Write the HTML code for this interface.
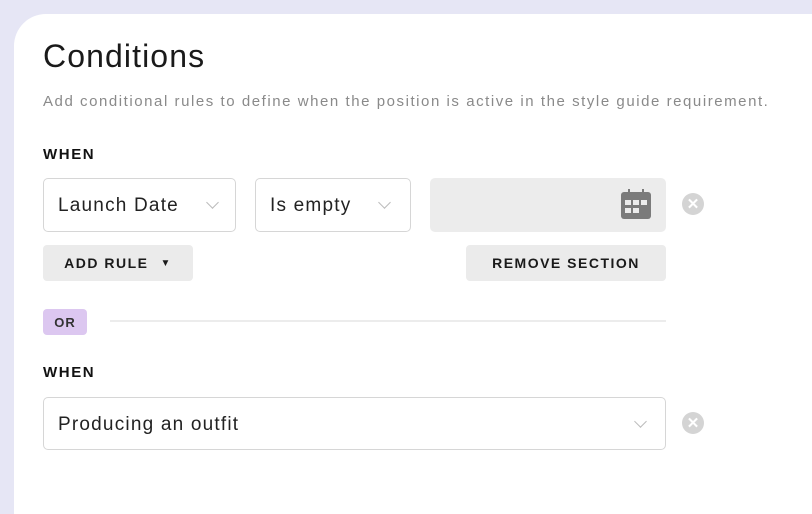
<!DOCTYPE html>
<html><head><meta charset="utf-8"><style>
*{box-sizing:border-box;margin:0;padding:0}
body{width:812px;height:460px;overflow:hidden;background:#e6e6f5;font-family:"Liberation Sans",sans-serif;position:relative}
.card{position:absolute;left:14px;top:14px;width:900px;height:500px;background:#fff;border-top-left-radius:32px}
.a{position:absolute}
h1{position:absolute;left:43px;top:38px;font-size:32px;font-weight:400;color:#1a1a1a;letter-spacing:1.1px}
.sub{left:43px;top:93px;font-size:15px;color:#8a8a8a;letter-spacing:1.55px;white-space:nowrap}
.when{font-size:15px;font-weight:700;color:#111;left:43px;letter-spacing:1.6px}
.sel{border:1px solid #d6d6d6;border-radius:5px;background:#fff;font-size:19px;color:#222;padding-left:14px;padding-top:2px;display:flex;align-items:center;letter-spacing:1.2px}
.chev{position:absolute;top:50%;margin-top:-7px;width:9px;height:9px;border-right:1.5px solid #bbb;border-bottom:1.5px solid #bbb;transform:rotate(45deg)}
.btn{background:#ebebeb;border-radius:4px;font-size:14px;font-weight:700;color:#1a1a1a;display:flex;align-items:center;justify-content:center;letter-spacing:1.5px}
.x{width:22px;height:22px;border-radius:50%;background:#d4d4d4;color:#fff;font-size:15px;font-weight:700;display:flex;align-items:center;justify-content:center}
</style></head><body>
<div class="card"></div>
<h1>Conditions</h1>
<div class="a sub">Add conditional rules to define when the position is active in the style guide requirement.</div>
<div class="a when" style="top:146px">WHEN</div>
<div class="a sel" style="left:43px;top:178px;width:193px;height:54px">Launch Date<span class="chev" style="right:18px"></span></div>
<div class="a sel" style="left:255px;top:178px;width:156px;height:54px">Is empty<span class="chev" style="right:21px"></span></div>
<div class="a" style="left:430px;top:178px;width:236px;height:54px;background:#ececec;border-radius:5px"></div>
<svg class="a" style="left:621px;top:189px" width="30" height="30" viewBox="0 0 30 30"><rect x="0" y="3" width="30" height="27" rx="3" fill="#7b7b7b"/><rect x="7" y="0" width="2" height="6" fill="#7b7b7b"/><rect x="21" y="0" width="2" height="6" fill="#7b7b7b"/><g fill="#ececec"><rect x="4" y="11" width="6" height="5"/><rect x="12" y="11" width="6" height="5"/><rect x="20" y="11" width="6" height="5"/><rect x="4" y="19" width="6" height="5"/><rect x="12" y="19" width="6" height="5"/></g></svg>
<div class="a x" style="left:682px;top:193px">✕</div>
<div class="a btn" style="left:43px;top:245px;width:150px;height:36px">ADD RULE<span style="margin-left:12px;font-size:10px">▼</span></div>
<div class="a btn" style="left:466px;top:245px;width:200px;height:36px">REMOVE SECTION</div>
<div class="a" style="left:43px;top:309px;width:44px;height:26px;background:#dcc7f0;border-radius:4px;font-size:13px;font-weight:700;color:#333;display:flex;align-items:center;justify-content:center;letter-spacing:1px">OR</div>
<div class="a" style="left:110px;top:320px;width:556px;height:2px;background:#ececec"></div>
<div class="a when" style="top:364px">WHEN</div>
<div class="a sel" style="left:43px;top:397px;width:623px;height:53px">Producing an outfit<span class="chev" style="right:20px"></span></div>
<div class="a x" style="left:682px;top:412px">✕</div>
</body></html>
